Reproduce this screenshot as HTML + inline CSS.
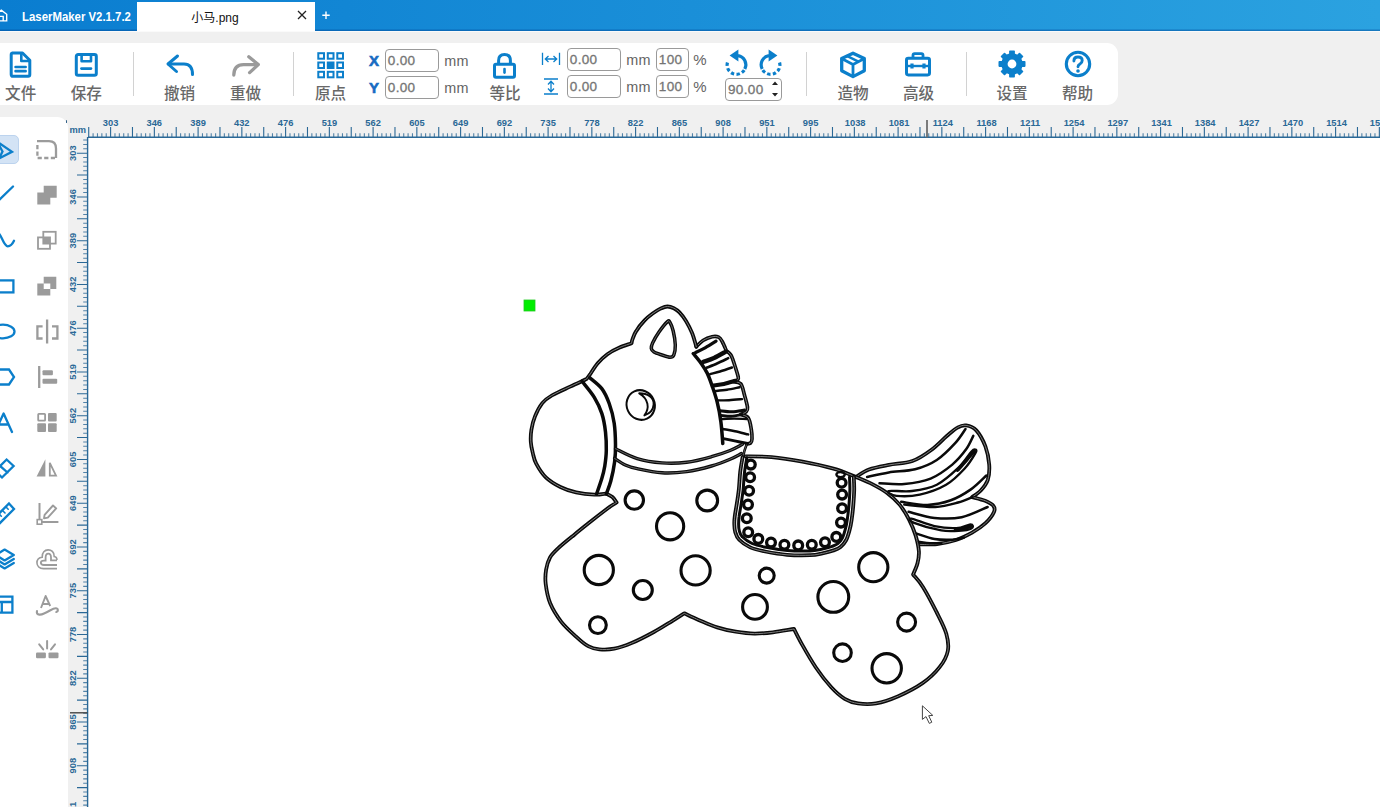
<!DOCTYPE html>
<html lang="zh">
<head>
<meta charset="utf-8">
<title>LaserMaker</title>
<style>
*{box-sizing:border-box;margin:0;padding:0}
html,body{width:1380px;height:807px;overflow:hidden;background:#f0f0f0;font-family:"Liberation Sans","Noto Sans CJK SC",sans-serif;}
#app{position:relative;width:1380px;height:807px;overflow:hidden;background:#f0f0f0}
.abs{position:absolute}
#titlebar{position:absolute;left:0;top:0;width:1380px;height:30.5px;background:linear-gradient(90deg,#0a7dd0 0%,#1a8fd8 50%,#2ba2e0 100%);box-shadow:inset 0 -1.5px 0 rgba(0,70,150,0.45), 0 1px 0 #fafafa}
#titlebar .apptitle{position:absolute;left:22px;top:10px;font-size:12.2px;line-height:14px;color:#fff;font-weight:bold;letter-spacing:0;transform:scaleX(0.935);transform-origin:0 0;white-space:nowrap}
#tab{position:absolute;left:137px;top:2px;width:178px;height:29px;background:#fff}
#tab .name{position:absolute;left:0;width:156px;top:8.5px;text-align:center;font-size:12px;line-height:15px;color:#111}
#toolbar{position:absolute;left:-12px;top:43px;width:1130px;height:62px;background:#fff;border-radius:11px}
.tbtn{position:absolute;top:43px;height:62px;text-align:center}
.tlabel{position:absolute;top:85px;font-size:15.6px;line-height:18px;color:#686868;font-weight:500;white-space:nowrap;transform:translateX(-50%)}
.sep{position:absolute;top:52px;height:44px;width:1px;background:#d2d2d2}
.inp{position:absolute;height:23px;border:1px solid #9a9a9a;border-radius:4px;background:#fff;font-size:13.5px;line-height:22.4px;color:#747474;-webkit-text-stroke:0.3px #747474;letter-spacing:0.35px;padding-left:1.8px;white-space:nowrap;overflow:hidden}
.unit{position:absolute;font-size:14.4px;line-height:16px;color:#636363;margin-left:-0.8px;letter-spacing:0.2px}
.xy{position:absolute;font-size:15px;line-height:16px;font-weight:bold;color:#186bc2;-webkit-text-stroke:0.6px #186bc2}
#sidebar{position:absolute;left:-12px;top:116.6px;width:79.8px;height:700px;background:#fff;border-radius:11px}
#canvas{position:absolute;left:88px;top:138px;width:1292px;height:669px;background:#fff}
svg{position:absolute;overflow:visible}
</style>
</head>
<body>
<div id="app">
<!-- TITLEBAR -->
<div id="titlebar">
  <svg style="left:0;top:0" width="12" height="30" viewBox="0 0 12 30"><path d="M-4.4 14.3 L1.3 10.2 L6.7 14.3 V20.9 H-4.4 Z M-0.7 20.9 V16.4 H3.2 V20.9" fill="none" stroke="#fff" stroke-width="1.4" stroke-linejoin="miter"/></svg>
  <div class="apptitle">LaserMaker V2.1.7.2</div>
  <div id="tab"><div class="name">小马.png</div>
    <svg style="left:160px;top:8px" width="10" height="10" viewBox="0 0 10 10"><path d="M1 1 L9 9 M9 1 L1 9" stroke="#222" stroke-width="1.3" fill="none"/></svg>
  </div>
  <svg style="left:321px;top:10px" width="10" height="10" viewBox="0 0 10 10"><path d="M5 1.6 V9 M1.3 5.3 H8.7" stroke="#fff" stroke-width="1.4" fill="none"/></svg>
</div>
<!-- TOOLBAR -->
<div id="toolbar"></div>
<!--TB-START-->
<!-- file -->
<svg style="left:9px;top:51px" width="23" height="28" viewBox="0 0 23 28"><path d="M3.2 2 H13.5 L20.8 9.3 V23.6 Q20.8 25.3 19.1 25.3 H3.9 Q2.2 25.3 2.2 23.6 V3.7 Q2.2 2 3.9 2 Z" fill="none" stroke="#0b7fcb" stroke-width="3" stroke-linejoin="round"/><path d="M12.3 2.5 V10 H20" fill="none" stroke="#0b7fcb" stroke-width="2.6" stroke-linejoin="round"/><path d="M6.6 16 H16.6 M6.6 20.2 H16.6" stroke="#0b7fcb" stroke-width="2.7" stroke-linecap="round"/></svg>
<div class="tlabel" style="left:20.7px">文件</div>
<!-- save -->
<svg style="left:74px;top:52px" width="25" height="26" viewBox="0 0 25 26"><rect x="2.3" y="2.6" width="20" height="20.6" rx="1.8" fill="none" stroke="#0b7fcb" stroke-width="3"/><path d="M7.6 3 V9.2 H17 V3" fill="none" stroke="#0b7fcb" stroke-width="2.6" stroke-linejoin="round"/><path d="M7.4 16.6 H17" stroke="#0b7fcb" stroke-width="2.6" stroke-linecap="round"/></svg>
<div class="tlabel" style="left:86.3px">保存</div>
<div class="sep" style="left:133px"></div>
<!-- undo -->
<svg style="left:165px;top:54px" width="30" height="24" viewBox="0 0 30 24"><path d="M12.5 2 L3 10 L11.5 17.5" fill="none" stroke="#0b7fcb" stroke-width="3" stroke-linecap="round" stroke-linejoin="round"/><path d="M3.5 10 H19 Q27.5 10 27.5 20.5" fill="none" stroke="#0b7fcb" stroke-width="3" stroke-linecap="round"/></svg>
<div class="tlabel" style="left:179.5px">撤销</div>
<!-- redo -->
<svg style="left:231px;top:55px" width="30" height="24" viewBox="0 0 30 24"><path d="M17.8 1.8 L27.3 9.6 L18.6 17.6" fill="none" stroke="#9a9a9a" stroke-width="3.3" stroke-linecap="round" stroke-linejoin="round"/><path d="M26.5 9.6 H12.5 Q3 9.6 2.8 20" fill="none" stroke="#9a9a9a" stroke-width="3.3" stroke-linecap="round"/></svg>
<div class="tlabel" style="left:245.5px">重做</div>
<div class="sep" style="left:293px"></div>
<!-- origin grid -->
<svg style="left:317px;top:51.6px" width="27" height="27" viewBox="0 0 27 27"><g fill="none" stroke="#0b7fcb" stroke-width="2"><rect x="1.3" y="1.2" width="5.7" height="5.5"/><rect x="10.8" y="1.2" width="5.7" height="5.5"/><rect x="20.3" y="1.2" width="5.7" height="5.5"/><rect x="1.3" y="10.5" width="5.7" height="5.5"/><rect x="10.8" y="10.5" width="5.7" height="5.5" fill="#0b7fcb"/><rect x="20.3" y="10.5" width="5.7" height="5.5"/><rect x="1.3" y="19.8" width="5.7" height="5.5"/><rect x="10.8" y="19.8" width="5.7" height="5.5"/><rect x="20.3" y="19.8" width="5.7" height="5.5"/></g></svg>
<div class="tlabel" style="left:330.5px">原点</div>
<!-- XY -->
<div class="xy" style="left:369px;top:53px">X</div>
<div class="xy" style="left:369px;top:80px">Y</div>
<div class="inp" style="left:385px;top:49px;width:54px">0.00</div>
<div class="inp" style="left:385px;top:76px;width:54px">0.00</div>
<div class="unit" style="left:445px;top:53px">mm</div>
<div class="unit" style="left:445px;top:80px">mm</div>
<!-- lock -->
<svg style="left:492px;top:52px" width="25" height="28" viewBox="0 0 25 28"><rect x="2.5" y="12.2" width="20" height="13" rx="1.5" fill="none" stroke="#0b7fcb" stroke-width="3"/><path d="M6.6 12 V8.5 Q6.6 2.5 12.5 2.5 Q18.4 2.5 18.4 8.5 V12" fill="none" stroke="#0b7fcb" stroke-width="3"/><path d="M12.5 17 V20.6" stroke="#0b7fcb" stroke-width="2.6" stroke-linecap="round"/></svg>
<div class="tlabel" style="left:505px">等比</div>
<!-- width icon -->
<svg style="left:541px;top:52px" width="20" height="14" viewBox="0 0 20 14"><path d="M1.5 0.8 V13 M18.5 0.8 V13 M4.5 7 H15.5 M7.5 4 L4.3 7 L7.5 10 M12.5 4 L15.7 7 L12.5 10" fill="none" stroke="#0b7fcb" stroke-width="1.3"/></svg>
<!-- height icon -->
<svg style="left:543px;top:78px" width="16" height="17" viewBox="0 0 16 17"><path d="M1 1 H15 M1 16 H15 M8 3.5 V13.5 M5 6.5 L8 3.3 L11 6.5 M5 10.5 L8 13.7 L11 10.5" fill="none" stroke="#0b7fcb" stroke-width="1.3"/></svg>
<div class="inp" style="left:567px;top:48px;width:54px">0.00</div>
<div class="inp" style="left:567px;top:75px;width:54px">0.00</div>
<div class="unit" style="left:627px;top:52px">mm</div>
<div class="unit" style="left:627px;top:79px">mm</div>
<div class="inp" style="left:656px;top:48px;width:33px">100</div>
<div class="inp" style="left:656px;top:75px;width:33px">100</div>
<div class="unit" style="left:694px;top:52px;font-size:15px">%</div>
<div class="unit" style="left:694px;top:79px;font-size:15px">%</div>
<!-- rotate ccw -->
<svg style="left:723px;top:48px" width="28" height="30" viewBox="0 0 28 30"><path d="M15 7.6 A9.3 9.3 0 0 1 21.8 21.0" fill="none" stroke="#0b7fcb" stroke-width="3.2"/><path d="M21.8 21.0 A9.3 9.3 0 0 1 5.0 13.0" fill="none" stroke="#0b7fcb" stroke-width="3.2" stroke-dasharray="3.4 2.3" stroke-dashoffset="-1.2"/><path d="M15.4 1.6 V13.4 L6.6 7.6 Z" fill="#0b7fcb"/></svg>
<!-- rotate cw -->
<svg style="left:756px;top:48px" width="28" height="30" viewBox="0 0 28 30"><g transform="translate(28 0) scale(-1 1)"><path d="M15 7.6 A9.3 9.3 0 0 1 21.8 21.0" fill="none" stroke="#0b7fcb" stroke-width="3.2"/><path d="M21.8 21.0 A9.3 9.3 0 0 1 5.0 13.0" fill="none" stroke="#0b7fcb" stroke-width="3.2" stroke-dasharray="3.4 2.3" stroke-dashoffset="-1.2"/><path d="M15.4 1.6 V13.4 L6.6 7.6 Z" fill="#0b7fcb"/></g></svg>
<!-- spin -->
<div class="inp" style="left:725px;top:78px;width:57px;padding-left:2px">90.00</div>
<svg style="left:771px;top:80px" width="8" height="18" viewBox="0 0 8 18"><path d="M1 5 L4 1.5 L7 5 Z M1 13 L4 16.5 L7 13 Z" fill="#222"/></svg>
<div class="sep" style="left:806px"></div>
<!-- box -->
<svg style="left:839px;top:51px" width="28" height="28" viewBox="0 0 28 28"><path d="M14 2.2 L25.3 7.6 V19.8 L14 25.6 L2.7 19.8 V7.6 Z" fill="none" stroke="#0b7fcb" stroke-width="3.3" stroke-linejoin="round"/><path d="M3 7.8 L14 13.4 L25 7.8 M14 13.4 V25" fill="none" stroke="#0b7fcb" stroke-width="2.8" stroke-linejoin="round"/><path d="M8.3 5.2 L19.5 10.6" stroke="#0b7fcb" stroke-width="2.4"/></svg>
<div class="tlabel" style="left:853px">造物</div>
<!-- briefcase -->
<svg style="left:904px;top:51px" width="28" height="27" viewBox="0 0 28 27"><rect x="2.5" y="7.3" width="23" height="16.6" rx="1.8" fill="none" stroke="#0b7fcb" stroke-width="3"/><path d="M9 7 V4.2 Q9 2.6 10.6 2.6 H17.4 Q19 2.6 19 4.2 V7" fill="none" stroke="#0b7fcb" stroke-width="2.8"/><path d="M3 15 H25" stroke="#0b7fcb" stroke-width="2.4"/><path d="M8 12.6 V17.6 M20 12.6 V17.6" stroke="#0b7fcb" stroke-width="3.2"/></svg>
<div class="tlabel" style="left:918.5px">高级</div>
<div class="sep" style="left:966px"></div>
<!-- gear -->
<svg style="left:998.3px;top:50px" width="28" height="28" viewBox="-14 -14 28 28"><g fill="#0b7fcb"><circle r="10.7"/><rect x="-2.9" y="-13.5" width="5.8" height="6" rx="0.8" transform="rotate(0)"/><rect x="-2.9" y="-13.5" width="5.8" height="6" rx="0.8" transform="rotate(45)"/><rect x="-2.9" y="-13.5" width="5.8" height="6" rx="0.8" transform="rotate(90)"/><rect x="-2.9" y="-13.5" width="5.8" height="6" rx="0.8" transform="rotate(135)"/><rect x="-2.9" y="-13.5" width="5.8" height="6" rx="0.8" transform="rotate(180)"/><rect x="-2.9" y="-13.5" width="5.8" height="6" rx="0.8" transform="rotate(225)"/><rect x="-2.9" y="-13.5" width="5.8" height="6" rx="0.8" transform="rotate(270)"/><rect x="-2.9" y="-13.5" width="5.8" height="6" rx="0.8" transform="rotate(315)"/></g><circle r="4.4" fill="#fff"/></svg>
<div class="tlabel" style="left:1012px">设置</div>
<!-- help -->
<svg style="left:1064px;top:50px" width="28" height="28" viewBox="0 0 28 28"><circle cx="14" cy="14" r="11.7" fill="none" stroke="#0b7fcb" stroke-width="3.1"/><path d="M9.9 11.0 Q9.9 7.0 14 7.0 Q18.2 7.0 18.2 10.6 Q18.2 12.8 16 14.0 Q14 15.1 14 16.8" fill="none" stroke="#0b7fcb" stroke-width="2.9" stroke-linecap="round"/><circle cx="14" cy="21.0" r="1.8" fill="#0b7fcb"/></svg>
<div class="tlabel" style="left:1077.5px">帮助</div>

<!--TB-END-->
<!-- SIDEBAR -->
<div id="sidebar"></div>
<div class="abs" style="left:65.6px;top:120px;width:1.6px;height:2.8px;background:#2f5f86;border-radius:0.6px"></div>
<!--SB-START-->
<div class="abs" style="left:-6px;top:135px;width:25px;height:29px;background:#d3e3f5;border:1px solid #bcd3ee;border-radius:5px"></div>
<svg style="left:0;top:120px" width="68" height="560" viewBox="0 120 68 560">
<g fill="none" stroke="#0b7fcb" stroke-width="2.3" stroke-linejoin="round" stroke-linecap="round">
<!-- select arrow -->
<path d="M-3 141.5 L12 151.8 L-1 158.6 L2.5 151.5 Z" stroke-linejoin="miter"/>
<!-- line -->
<path d="M13 186.5 L-2 201"/>
<!-- curve -->
<path d="M-4 236 C0 226 2.5 246.5 7.8 246.3 C11 246.3 12.5 244 14 240.8"/>
<!-- rect -->
<rect x="-8" y="280.4" width="21.4" height="12" stroke-linejoin="miter"/>
<!-- ellipse -->
<ellipse cx="3" cy="331.5" rx="11.5" ry="6.8"/>
<!-- polygon -->
<path d="M-6 369.5 H9 L14 377 L9 384.5 H-6 Z" stroke-linejoin="miter"/>
<!-- A -->
<path d="M-5 432 L3.6 413.5 L12 432 M-2 424.5 H8.5"/>
<!-- eraser -->
<path d="M6.6 459.5 L13.6 466 L2 477.5 L-5 471 Z M-1 465 L7.5 472.5" stroke-linejoin="miter"/>
<!-- ruler -->
<path d="M9 503.5 L14 509 L-2 525 L-7 519.5 Z" stroke-linejoin="miter"/>
<path d="M6 507 L8.2 509.2 M2.5 510.5 L5 513 M-0.8 514 L1.3 516.2" stroke-width="1.6"/>
<!-- layers -->
<path d="M4.6 549.6 L13.8 555 L4.6 560.4 L-4.6 555 Z"/>
<path d="M-4.6 559 L4.6 564.4 L13.8 559 M-4.6 563 L4.6 568.4 L13.8 563"/>
<!-- layout -->
<path d="M-8 596.6 H12.4 V612.6 H-8 Z M-8 602 H12.4 M1.8 602 V612.6" stroke-linejoin="miter"/>
</g>
<g fill="none" stroke="#9b9b9b" stroke-width="2.3">
<!-- g1 dashed round rect -->
<path d="M37 141.2 H49 Q56 141.2 56 148.5 V158"/>
<path d="M37.4 145 V158 H56" stroke-dasharray="4.2 2.4"/>
<!-- g2 union -->
<path d="M43.7 185.7 H56.7 V197.8 H50.3 V204.4 H37.3 V192.6 H43.7 Z" fill="#9b9b9b" stroke="none"/>
<!-- g3 intersect -->
<rect x="43.3" y="231.8" width="12.4" height="11.8" stroke-width="1.8"/><rect x="38" y="237.4" width="12" height="11.4" stroke-width="1.8"/><rect x="43.3" y="237.4" width="6.7" height="6.2" fill="#9b9b9b" stroke="none"/>
<!-- g4 xor -->
<path d="M43.7 276.8 H56.3 V289.1 H50.3 V295.5 H37.3 V283.4 H43.7 Z M43.7 283.4 V289.1 H50.3 V283.4 Z" fill="#9b9b9b" fill-rule="evenodd" stroke="none"/>
<!-- g5 flip -->
<path d="M47.1 319.5 V343.5 M42.6 326.4 H37.4 V338.5 H42.6 M52 326.4 H57.4 V338.5 H52"/>
<!-- g6 align -->
<path d="M39.2 366 V388"/><rect x="42.5" y="370.2" width="10.4" height="5" rx="1" fill="#9b9b9b" stroke="none"/><rect x="42.5" y="378.8" width="14.7" height="5" rx="1" fill="#9b9b9b" stroke="none"/>
<!-- g7 grid -->
<rect x="38.2" y="413.8" width="6.9" height="6.9" rx="0.6" stroke-width="1.8"/><rect x="48" y="412.9" width="8.7" height="8.7" rx="1" fill="#9b9b9b" stroke="none"/><rect x="37.3" y="423.2" width="8.7" height="8.7" rx="1" fill="#9b9b9b" stroke="none"/><rect x="48" y="423.2" width="8.7" height="8.7" rx="1" fill="#9b9b9b" stroke="none"/>
<!-- g8 mirror -->
<path d="M45.4 459.3 V476.5 H36.6 Z" fill="#9b9b9b" stroke="none"/><path d="M49.8 462.8 V475.6 H56.0 Z" stroke-width="1.8"/>
<!-- g9 node edit -->
<path d="M39.5 503 V519.5 M42 522 H58.4" stroke-width="2"/><rect x="37.2" y="519.6" width="4.6" height="4.6" stroke-width="1.6"/><path d="M44.6 514.8 L53 505.5 L56.2 508.4 L47.8 517.6 L44 518.4 Z" stroke-width="1.9" stroke-linejoin="round"/>
<!-- g10 cloud offset -->
<path d="M57 568.6 H43.5 C35 568.6 35 557.5 42.2 557.2 C41.5 547.5 54.5 547.5 54.2 556.5 C56 556.8 57 558 57 560" stroke-width="1.6"/>
<path d="M57 565 H44 C39.8 565 39.8 560.6 44 560.6 H45.6 V557.5 C45.6 552.4 51 552.4 51 557.5 V560.4 H57" stroke-width="1.8"/>
<!-- g11 text on path -->
<path d="M41 608 L45.6 596 L50.2 606 M42.6 604 H48.6" stroke-width="1.9" stroke-linejoin="round"/><path d="M37 611 C36 615 40 615.5 44 613.5 C50 611 53 608 56 608.3 C58.5 608.6 58.5 611.5 56.3 612" stroke-width="2.1" stroke-linecap="round"/>
<!-- g12 explode -->
<rect x="36" y="652.4" width="9.9" height="5.8" rx="1.2" fill="#9b9b9b" stroke="none"/><rect x="48.5" y="652.4" width="10" height="5.8" rx="1.2" fill="#9b9b9b" stroke="none"/><path d="M47.1 641 V648.6 M39.2 644.4 L43.2 649.4 M55 644.4 L51 649.4" stroke-width="2" stroke-linecap="round"/>
</g>
</svg>

<!--SB-END-->
<!-- CANVAS -->
<div id="canvas"></div>
<!--RL-START-->
<svg style="left:0;top:0" width="1380" height="807" viewBox="0 0 1380 807">
<g stroke="#2a6896" fill="none">
<path d="M88 137.3 H1380" stroke-width="1.4"/>
<path d="M87.6 137 V807" stroke-width="1.4"/>
<path d="M88.72 127V137.5M110.60 127V137.5M132.47 127V137.5M154.35 127V137.5M176.22 127V137.5M198.10 127V137.5M219.97 127V137.5M241.85 127V137.5M263.73 127V137.5M285.60 127V137.5M307.48 127V137.5M329.35 127V137.5M351.23 127V137.5M373.10 127V137.5M394.98 127V137.5M416.85 127V137.5M438.73 127V137.5M460.60 127V137.5M482.48 127V137.5M504.35 127V137.5M526.23 127V137.5M548.10 127V137.5M569.98 127V137.5M591.85 127V137.5M613.73 127V137.5M635.60 127V137.5M657.48 127V137.5M679.35 127V137.5M701.23 127V137.5M723.10 127V137.5M744.98 127V137.5M766.85 127V137.5M788.73 127V137.5M810.60 127V137.5M832.48 127V137.5M854.35 127V137.5M876.23 127V137.5M898.10 127V137.5M919.98 127V137.5M941.85 127V137.5M963.73 127V137.5M985.60 127V137.5M1007.48 127V137.5M1029.35 127V137.5M1051.22 127V137.5M1073.10 127V137.5M1094.97 127V137.5M1116.85 127V137.5M1138.72 127V137.5M1160.60 127V137.5M1182.47 127V137.5M1204.35 127V137.5M1226.22 127V137.5M1248.10 127V137.5M1269.97 127V137.5M1291.85 127V137.5M1313.72 127V137.5M1335.60 127V137.5M1357.47 127V137.5M1379.35 127V137.5" stroke-width="1.1"/>
<path d="M93.10 133.2V137.5M97.47 133.2V137.5M101.85 133.2V137.5M106.22 133.2V137.5M114.97 133.2V137.5M119.35 133.2V137.5M123.72 133.2V137.5M128.10 133.2V137.5M136.85 133.2V137.5M141.22 133.2V137.5M145.60 133.2V137.5M149.97 133.2V137.5M158.72 133.2V137.5M163.10 133.2V137.5M167.47 133.2V137.5M171.85 133.2V137.5M180.60 133.2V137.5M184.97 133.2V137.5M189.35 133.2V137.5M193.72 133.2V137.5M202.47 133.2V137.5M206.85 133.2V137.5M211.22 133.2V137.5M215.60 133.2V137.5M224.35 133.2V137.5M228.72 133.2V137.5M233.10 133.2V137.5M237.47 133.2V137.5M246.22 133.2V137.5M250.60 133.2V137.5M254.97 133.2V137.5M259.35 133.2V137.5M268.10 133.2V137.5M272.48 133.2V137.5M276.85 133.2V137.5M281.23 133.2V137.5M289.98 133.2V137.5M294.35 133.2V137.5M298.73 133.2V137.5M303.10 133.2V137.5M311.85 133.2V137.5M316.23 133.2V137.5M320.60 133.2V137.5M324.98 133.2V137.5M333.73 133.2V137.5M338.10 133.2V137.5M342.48 133.2V137.5M346.85 133.2V137.5M355.60 133.2V137.5M359.98 133.2V137.5M364.35 133.2V137.5M368.73 133.2V137.5M377.48 133.2V137.5M381.85 133.2V137.5M386.23 133.2V137.5M390.60 133.2V137.5M399.35 133.2V137.5M403.73 133.2V137.5M408.10 133.2V137.5M412.48 133.2V137.5M421.23 133.2V137.5M425.60 133.2V137.5M429.98 133.2V137.5M434.35 133.2V137.5M443.10 133.2V137.5M447.48 133.2V137.5M451.85 133.2V137.5M456.23 133.2V137.5M464.98 133.2V137.5M469.35 133.2V137.5M473.73 133.2V137.5M478.10 133.2V137.5M486.85 133.2V137.5M491.23 133.2V137.5M495.60 133.2V137.5M499.98 133.2V137.5M508.73 133.2V137.5M513.10 133.2V137.5M517.48 133.2V137.5M521.85 133.2V137.5M530.60 133.2V137.5M534.98 133.2V137.5M539.35 133.2V137.5M543.73 133.2V137.5M552.48 133.2V137.5M556.85 133.2V137.5M561.23 133.2V137.5M565.60 133.2V137.5M574.35 133.2V137.5M578.73 133.2V137.5M583.10 133.2V137.5M587.48 133.2V137.5M596.23 133.2V137.5M600.60 133.2V137.5M604.98 133.2V137.5M609.35 133.2V137.5M618.10 133.2V137.5M622.48 133.2V137.5M626.85 133.2V137.5M631.23 133.2V137.5M639.98 133.2V137.5M644.35 133.2V137.5M648.73 133.2V137.5M653.10 133.2V137.5M661.85 133.2V137.5M666.23 133.2V137.5M670.60 133.2V137.5M674.98 133.2V137.5M683.73 133.2V137.5M688.10 133.2V137.5M692.48 133.2V137.5M696.85 133.2V137.5M705.60 133.2V137.5M709.98 133.2V137.5M714.35 133.2V137.5M718.73 133.2V137.5M727.48 133.2V137.5M731.85 133.2V137.5M736.23 133.2V137.5M740.60 133.2V137.5M749.35 133.2V137.5M753.73 133.2V137.5M758.10 133.2V137.5M762.48 133.2V137.5M771.23 133.2V137.5M775.60 133.2V137.5M779.98 133.2V137.5M784.35 133.2V137.5M793.10 133.2V137.5M797.48 133.2V137.5M801.85 133.2V137.5M806.23 133.2V137.5M814.98 133.2V137.5M819.35 133.2V137.5M823.73 133.2V137.5M828.10 133.2V137.5M836.85 133.2V137.5M841.23 133.2V137.5M845.60 133.2V137.5M849.98 133.2V137.5M858.73 133.2V137.5M863.10 133.2V137.5M867.48 133.2V137.5M871.85 133.2V137.5M880.60 133.2V137.5M884.98 133.2V137.5M889.35 133.2V137.5M893.73 133.2V137.5M902.48 133.2V137.5M906.85 133.2V137.5M911.23 133.2V137.5M915.60 133.2V137.5M924.35 133.2V137.5M928.73 133.2V137.5M933.10 133.2V137.5M937.48 133.2V137.5M946.23 133.2V137.5M950.60 133.2V137.5M954.98 133.2V137.5M959.35 133.2V137.5M968.10 133.2V137.5M972.48 133.2V137.5M976.85 133.2V137.5M981.23 133.2V137.5M989.98 133.2V137.5M994.35 133.2V137.5M998.73 133.2V137.5M1003.10 133.2V137.5M1011.85 133.2V137.5M1016.23 133.2V137.5M1020.60 133.2V137.5M1024.97 133.2V137.5M1033.72 133.2V137.5M1038.10 133.2V137.5M1042.47 133.2V137.5M1046.85 133.2V137.5M1055.60 133.2V137.5M1059.97 133.2V137.5M1064.35 133.2V137.5M1068.72 133.2V137.5M1077.47 133.2V137.5M1081.85 133.2V137.5M1086.22 133.2V137.5M1090.60 133.2V137.5M1099.35 133.2V137.5M1103.72 133.2V137.5M1108.10 133.2V137.5M1112.47 133.2V137.5M1121.22 133.2V137.5M1125.60 133.2V137.5M1129.97 133.2V137.5M1134.35 133.2V137.5M1143.10 133.2V137.5M1147.47 133.2V137.5M1151.85 133.2V137.5M1156.22 133.2V137.5M1164.97 133.2V137.5M1169.35 133.2V137.5M1173.72 133.2V137.5M1178.10 133.2V137.5M1186.85 133.2V137.5M1191.22 133.2V137.5M1195.60 133.2V137.5M1199.97 133.2V137.5M1208.72 133.2V137.5M1213.10 133.2V137.5M1217.47 133.2V137.5M1221.85 133.2V137.5M1230.60 133.2V137.5M1234.97 133.2V137.5M1239.35 133.2V137.5M1243.72 133.2V137.5M1252.47 133.2V137.5M1256.85 133.2V137.5M1261.22 133.2V137.5M1265.60 133.2V137.5M1274.35 133.2V137.5M1278.72 133.2V137.5M1283.10 133.2V137.5M1287.47 133.2V137.5M1296.22 133.2V137.5M1300.60 133.2V137.5M1304.97 133.2V137.5M1309.35 133.2V137.5M1318.10 133.2V137.5M1322.47 133.2V137.5M1326.85 133.2V137.5M1331.22 133.2V137.5M1339.97 133.2V137.5M1344.35 133.2V137.5M1348.72 133.2V137.5M1353.10 133.2V137.5M1361.85 133.2V137.5M1366.22 133.2V137.5M1370.60 133.2V137.5M1374.97 133.2V137.5" stroke-width="1.1" stroke-opacity="0.8"/>
<path d="M77 153.20H87.5M77 175.07H87.5M77 196.95H87.5M77 218.82H87.5M77 240.70H87.5M77 262.57H87.5M77 284.45H87.5M77 306.32H87.5M77 328.20H87.5M77 350.07H87.5M77 371.95H87.5M77 393.82H87.5M77 415.70H87.5M77 437.57H87.5M77 459.45H87.5M77 481.32H87.5M77 503.20H87.5M77 525.08H87.5M77 546.95H87.5M77 568.83H87.5M77 590.70H87.5M77 612.58H87.5M77 634.45H87.5M77 656.33H87.5M77 678.20H87.5M77 700.08H87.5M77 721.95H87.5M77 743.83H87.5M77 765.70H87.5M77 787.58H87.5" stroke-width="1.1"/>
<path d="M83.2 140.07H87.5M83.2 144.45H87.5M83.2 148.82H87.5M83.2 157.57H87.5M83.2 161.95H87.5M83.2 166.32H87.5M83.2 170.70H87.5M83.2 179.45H87.5M83.2 183.82H87.5M83.2 188.20H87.5M83.2 192.57H87.5M83.2 201.32H87.5M83.2 205.70H87.5M83.2 210.07H87.5M83.2 214.45H87.5M83.2 223.20H87.5M83.2 227.57H87.5M83.2 231.95H87.5M83.2 236.32H87.5M83.2 245.07H87.5M83.2 249.45H87.5M83.2 253.82H87.5M83.2 258.20H87.5M83.2 266.95H87.5M83.2 271.32H87.5M83.2 275.70H87.5M83.2 280.07H87.5M83.2 288.82H87.5M83.2 293.20H87.5M83.2 297.57H87.5M83.2 301.95H87.5M83.2 310.70H87.5M83.2 315.07H87.5M83.2 319.45H87.5M83.2 323.82H87.5M83.2 332.57H87.5M83.2 336.95H87.5M83.2 341.32H87.5M83.2 345.70H87.5M83.2 354.45H87.5M83.2 358.82H87.5M83.2 363.20H87.5M83.2 367.57H87.5M83.2 376.32H87.5M83.2 380.70H87.5M83.2 385.07H87.5M83.2 389.45H87.5M83.2 398.20H87.5M83.2 402.57H87.5M83.2 406.95H87.5M83.2 411.32H87.5M83.2 420.07H87.5M83.2 424.45H87.5M83.2 428.82H87.5M83.2 433.20H87.5M83.2 441.95H87.5M83.2 446.32H87.5M83.2 450.70H87.5M83.2 455.07H87.5M83.2 463.82H87.5M83.2 468.20H87.5M83.2 472.57H87.5M83.2 476.95H87.5M83.2 485.70H87.5M83.2 490.07H87.5M83.2 494.45H87.5M83.2 498.82H87.5M83.2 507.57H87.5M83.2 511.95H87.5M83.2 516.33H87.5M83.2 520.70H87.5M83.2 529.45H87.5M83.2 533.83H87.5M83.2 538.20H87.5M83.2 542.58H87.5M83.2 551.33H87.5M83.2 555.70H87.5M83.2 560.08H87.5M83.2 564.45H87.5M83.2 573.20H87.5M83.2 577.58H87.5M83.2 581.95H87.5M83.2 586.33H87.5M83.2 595.08H87.5M83.2 599.45H87.5M83.2 603.83H87.5M83.2 608.20H87.5M83.2 616.95H87.5M83.2 621.33H87.5M83.2 625.70H87.5M83.2 630.08H87.5M83.2 638.83H87.5M83.2 643.20H87.5M83.2 647.58H87.5M83.2 651.95H87.5M83.2 660.70H87.5M83.2 665.08H87.5M83.2 669.45H87.5M83.2 673.83H87.5M83.2 682.58H87.5M83.2 686.95H87.5M83.2 691.33H87.5M83.2 695.70H87.5M83.2 704.45H87.5M83.2 708.83H87.5M83.2 713.20H87.5M83.2 717.58H87.5M83.2 726.33H87.5M83.2 730.70H87.5M83.2 735.08H87.5M83.2 739.45H87.5M83.2 748.20H87.5M83.2 752.58H87.5M83.2 756.95H87.5M83.2 761.33H87.5M83.2 770.08H87.5M83.2 774.45H87.5M83.2 778.83H87.5M83.2 783.20H87.5M83.2 791.95H87.5M83.2 796.33H87.5M83.2 800.70H87.5M83.2 805.08H87.5" stroke-width="1.1" stroke-opacity="0.8"/>
</g>
<path d="M927 120 V137.5" stroke="#6e6e6e" stroke-width="1.8"/>
<path d="M70 712.8 H87.5" stroke="#444" stroke-width="1.4"/>
<g font-family="Liberation Sans, sans-serif" font-size="9.3" font-weight="bold" fill="#2a6896" text-anchor="middle">
<text x="110.6" y="126">303</text>
<text x="154.3" y="126">346</text>
<text x="198.1" y="126">389</text>
<text x="241.8" y="126">432</text>
<text x="285.6" y="126">476</text>
<text x="329.4" y="126">519</text>
<text x="373.1" y="126">562</text>
<text x="416.9" y="126">605</text>
<text x="460.6" y="126">649</text>
<text x="504.4" y="126">692</text>
<text x="548.1" y="126">735</text>
<text x="591.9" y="126">778</text>
<text x="635.6" y="126">822</text>
<text x="679.4" y="126">865</text>
<text x="723.1" y="126">908</text>
<text x="766.9" y="126">951</text>
<text x="810.6" y="126">995</text>
<text x="855.2" y="126">1038</text>
<text x="899.0" y="126">1081</text>
<text x="942.8" y="126">1124</text>
<text x="986.5" y="126">1168</text>
<text x="1030.2" y="126">1211</text>
<text x="1074.0" y="126">1254</text>
<text x="1117.8" y="126">1297</text>
<text x="1161.5" y="126">1341</text>
<text x="1205.2" y="126">1384</text>
<text x="1249.0" y="126">1427</text>
<text x="1292.8" y="126">1470</text>
<text x="1336.5" y="126">1514</text>
<text x="1380.2" y="126">1557</text>
<text x="77.8" y="133">mm</text>
<text transform="translate(76.4 153.2) rotate(-90)">303</text>
<text transform="translate(76.4 196.9) rotate(-90)">346</text>
<text transform="translate(76.4 240.7) rotate(-90)">389</text>
<text transform="translate(76.4 284.4) rotate(-90)">432</text>
<text transform="translate(76.4 328.2) rotate(-90)">476</text>
<text transform="translate(76.4 371.9) rotate(-90)">519</text>
<text transform="translate(76.4 415.7) rotate(-90)">562</text>
<text transform="translate(76.4 459.4) rotate(-90)">605</text>
<text transform="translate(76.4 503.2) rotate(-90)">649</text>
<text transform="translate(76.4 547.0) rotate(-90)">692</text>
<text transform="translate(76.4 590.7) rotate(-90)">735</text>
<text transform="translate(76.4 634.5) rotate(-90)">778</text>
<text transform="translate(76.4 678.2) rotate(-90)">822</text>
<text transform="translate(76.4 722.0) rotate(-90)">865</text>
<text transform="translate(76.4 765.7) rotate(-90)">908</text>
<text transform="translate(76.4 809.5) rotate(-90)">951</text>
</g></svg>
<!--RL-END-->
<!--HS-START-->
<svg style="left:0;top:0" width="1380" height="807" viewBox="0 0 1380 807">
<g fill="none" stroke="#0a0a0a" stroke-linecap="round" stroke-linejoin="round">
<path d="M856.0 477.0C858.1 475.7 863.5 471.5 869.0 469.5C874.5 467.5 881.8 466.3 889.0 464.9C896.2 463.5 905.3 463.5 912.4 461.0C919.4 458.6 925.5 454.2 931.2 450.0C937.0 445.8 942.4 439.8 946.8 436.0C951.2 432.3 954.3 429.3 957.5 427.6C960.7 425.8 963.0 424.9 966.1 425.4C969.3 425.9 973.1 426.9 976.3 430.4C979.5 433.9 983.2 440.7 985.4 446.4C987.5 452.1 988.8 459.1 989.2 464.7C989.6 470.2 989.1 475.5 987.8 479.8C986.4 484.0 983.6 487.3 981.0 490.2C978.4 493.1 973.7 496.0 972.2 497.1C974.3 497.7 981.6 499.3 985.1 500.7C988.6 502.2 991.9 503.8 993.3 505.7C994.8 507.6 995.3 509.1 994.0 512.0C992.7 515.0 989.1 519.8 985.5 523.2C981.8 526.6 977.0 529.8 972.1 532.6C967.2 535.3 961.8 538.1 955.9 540.0C950.1 541.9 943.2 543.3 937.1 544.0C930.9 544.7 922.0 544.3 919.0 544.4" stroke-width="3.8"/>
<path d="M856.0 477.0C858.1 475.7 863.5 471.5 869.0 469.5C874.5 467.5 881.8 466.3 889.0 464.9C896.2 463.5 905.3 463.5 912.4 461.0C919.4 458.6 925.5 454.2 931.2 450.0C937.0 445.8 942.4 439.8 946.8 436.0C951.2 432.3 954.3 429.3 957.5 427.6C960.7 425.8 963.0 424.9 966.1 425.4C969.3 425.9 973.1 426.9 976.3 430.4C979.5 433.9 983.2 440.7 985.4 446.4C987.5 452.1 988.8 459.1 989.2 464.7C989.6 470.2 989.1 475.5 987.8 479.8C986.4 484.0 983.6 487.3 981.0 490.2C978.4 493.1 973.7 496.0 972.2 497.1C974.3 497.7 981.6 499.3 985.1 500.7C988.6 502.2 991.9 503.8 993.3 505.7C994.8 507.6 995.3 509.1 994.0 512.0C992.7 515.0 989.1 519.8 985.5 523.2C981.8 526.6 977.0 529.8 972.1 532.6C967.2 535.3 961.8 538.1 955.9 540.0C950.1 541.9 943.2 543.3 937.1 544.0C930.9 544.7 922.0 544.3 919.0 544.4" stroke="#8c8c8c" stroke-width="0.9"/>
<path d="M856.0 477.0C852.2 475.6 842.4 471.2 833.5 468.7C824.6 466.2 812.8 463.6 802.5 461.7C792.2 459.8 781.0 458.0 771.5 457.1C762.0 456.2 749.8 456.4 745.5 456.3" stroke-width="3.8"/>
<path d="M856.0 477.0C852.2 475.6 842.4 471.2 833.5 468.7C824.6 466.2 812.8 463.6 802.5 461.7C792.2 459.8 781.0 458.0 771.5 457.1C762.0 456.2 749.8 456.4 745.5 456.3" stroke="#8c8c8c" stroke-width="0.9"/>
<path d="M696.3 346.7C697.5 345.6 700.4 342.1 703.0 340.5C705.6 338.9 709.5 337.4 712.1 336.8C714.7 336.2 716.9 336.4 718.6 337.2C720.3 338.0 720.9 339.2 722.2 341.5C723.5 343.8 725.7 349.2 726.4 350.8C727.1 351.5 729.4 352.8 730.7 354.8C732.0 356.8 732.8 359.3 734.0 363.0C735.2 366.7 737.6 374.0 738.2 376.8C738.8 379.6 738.4 379.0 737.6 379.8C736.8 380.6 733.9 381.3 733.2 381.6C734.5 382.0 738.8 381.6 740.7 383.8C742.6 386.0 743.3 390.9 744.4 394.8C745.5 398.7 747.2 404.4 747.5 407.2C747.8 410.0 747.4 410.6 746.2 411.8C745.1 413.0 741.5 414.0 740.6 414.4C741.9 415.0 746.4 415.4 748.2 417.9C750.0 420.4 750.7 426.0 751.3 429.5C751.9 433.0 752.1 436.8 752.0 439.0C751.9 441.2 751.4 442.2 750.5 443.0C749.6 443.8 747.5 443.8 746.9 443.9" stroke-width="3.7"/>
<path d="M696.3 346.7C697.5 345.6 700.4 342.1 703.0 340.5C705.6 338.9 709.5 337.4 712.1 336.8C714.7 336.2 716.9 336.4 718.6 337.2C720.3 338.0 720.9 339.2 722.2 341.5C723.5 343.8 725.7 349.2 726.4 350.8C727.1 351.5 729.4 352.8 730.7 354.8C732.0 356.8 732.8 359.3 734.0 363.0C735.2 366.7 737.6 374.0 738.2 376.8C738.8 379.6 738.4 379.0 737.6 379.8C736.8 380.6 733.9 381.3 733.2 381.6C734.5 382.0 738.8 381.6 740.7 383.8C742.6 386.0 743.3 390.9 744.4 394.8C745.5 398.7 747.2 404.4 747.5 407.2C747.8 410.0 747.4 410.6 746.2 411.8C745.1 413.0 741.5 414.0 740.6 414.4C741.9 415.0 746.4 415.4 748.2 417.9C750.0 420.4 750.7 426.0 751.3 429.5C751.9 433.0 752.1 436.8 752.0 439.0C751.9 441.2 751.4 442.2 750.5 443.0C749.6 443.8 747.5 443.8 746.9 443.9" stroke="#8c8c8c" stroke-width="0.9"/>
<path d="M696.3 346.7C695.6 344.4 693.9 337.6 692.2 333.3C690.4 329.1 688.1 324.6 686.0 321.1C683.9 317.6 681.6 314.6 679.5 312.4C677.5 310.3 675.8 309.2 673.8 308.2C671.8 307.2 669.7 306.5 667.5 306.5C665.4 306.5 663.3 307.3 660.9 308.4C658.5 309.6 655.8 311.3 653.0 313.3C650.3 315.3 647.4 317.4 644.6 320.4C641.7 323.4 638.0 328.1 636.0 331.4C633.9 334.6 633.1 337.9 632.3 339.9C631.6 341.9 631.7 342.7 631.6 343.2C629.6 344.0 623.6 345.7 619.6 347.5C615.5 349.3 611.0 351.5 607.4 354.2C603.8 356.8 600.5 360.0 597.7 363.3C594.9 366.6 592.2 371.2 590.4 373.8C588.5 376.4 587.2 378.2 586.6 379.0C583.9 380.3 576.0 383.8 570.2 386.6C564.4 389.3 556.4 392.7 551.8 395.5C547.1 398.3 545.1 399.7 542.3 403.1C539.5 406.6 536.8 411.9 535.0 416.4C533.2 420.8 532.1 425.5 531.4 429.7C530.7 434.0 530.6 438.0 530.8 441.8C531.0 445.6 531.8 449.0 532.7 452.6C533.6 456.3 534.0 459.5 536.2 463.6C538.4 467.7 541.8 473.4 545.8 477.3C549.9 481.2 555.3 484.4 560.4 487.0C565.4 489.5 570.5 491.1 576.1 492.4C581.8 493.7 589.4 494.5 594.3 494.7C599.3 494.9 604.1 493.8 606.0 493.6C607.1 494.2 610.6 495.5 612.4 497.0C614.1 498.5 615.9 501.6 616.6 502.5C615.5 503.2 614.1 503.7 610.2 506.6C606.2 509.5 598.9 515.1 592.9 519.8C587.0 524.5 580.1 529.9 574.4 534.7C568.6 539.4 562.4 544.3 558.3 548.2C554.3 552.0 551.9 554.2 549.9 557.7C547.9 561.3 546.8 565.3 546.1 569.6C545.4 574.0 545.0 578.5 545.7 584.1C546.4 589.7 547.6 597.1 550.2 603.3C552.8 609.6 557.0 616.2 561.3 621.8C565.6 627.3 571.6 632.5 576.1 636.6C580.5 640.7 584.3 644.1 588.2 646.2C592.1 648.3 595.0 648.9 599.4 649.3C603.8 649.7 608.9 649.7 614.3 648.7C619.7 647.7 625.0 645.9 631.6 643.1C638.2 640.3 647.1 635.7 653.9 632.0C660.7 628.3 667.4 623.9 672.5 620.8C677.6 617.7 682.3 614.5 684.3 613.3C686.7 614.4 693.1 617.5 698.6 619.9C704.1 622.2 711.0 625.4 717.2 627.4C723.4 629.4 729.6 630.7 735.8 631.7C742.0 632.7 748.1 633.5 754.3 633.6C760.5 633.7 766.3 633.1 772.9 632.3C779.5 631.5 790.5 629.5 794.0 629.0C795.4 631.6 798.7 638.5 802.3 644.9C805.9 651.3 810.9 660.1 815.7 667.2C820.5 674.3 826.5 682.0 831.3 687.3C836.1 692.6 840.2 696.1 844.7 698.8C849.2 701.5 852.9 702.6 858.1 703.4C863.3 704.2 869.3 704.6 876.0 703.4C882.7 702.2 890.5 699.6 898.3 696.2C906.1 692.8 916.0 687.7 922.9 682.9C929.8 678.1 935.5 672.5 939.6 667.2C943.8 661.9 946.7 656.6 947.8 651.0C948.9 645.4 948.2 640.3 946.3 633.7C944.4 627.1 940.1 619.2 936.2 611.4C932.3 603.6 926.7 593.0 922.9 586.9C919.1 580.8 914.7 576.6 913.1 574.5C913.8 572.7 916.6 567.1 917.5 563.3C918.5 559.4 919.2 556.0 918.9 551.4C918.6 546.7 917.2 540.8 915.6 535.4C913.9 530.0 911.5 524.4 908.8 519.2C906.2 514.0 903.0 508.8 899.4 504.4C895.8 500.1 891.9 496.6 887.4 493.2C883.0 489.9 877.9 487.1 872.7 484.4C867.5 481.6 858.8 478.2 856.0 477.0" stroke-width="3.8"/>
<path d="M696.3 346.7C695.6 344.4 693.9 337.6 692.2 333.3C690.4 329.1 688.1 324.6 686.0 321.1C683.9 317.6 681.6 314.6 679.5 312.4C677.5 310.3 675.8 309.2 673.8 308.2C671.8 307.2 669.7 306.5 667.5 306.5C665.4 306.5 663.3 307.3 660.9 308.4C658.5 309.6 655.8 311.3 653.0 313.3C650.3 315.3 647.4 317.4 644.6 320.4C641.7 323.4 638.0 328.1 636.0 331.4C633.9 334.6 633.1 337.9 632.3 339.9C631.6 341.9 631.7 342.7 631.6 343.2C629.6 344.0 623.6 345.7 619.6 347.5C615.5 349.3 611.0 351.5 607.4 354.2C603.8 356.8 600.5 360.0 597.7 363.3C594.9 366.6 592.2 371.2 590.4 373.8C588.5 376.4 587.2 378.2 586.6 379.0C583.9 380.3 576.0 383.8 570.2 386.6C564.4 389.3 556.4 392.7 551.8 395.5C547.1 398.3 545.1 399.7 542.3 403.1C539.5 406.6 536.8 411.9 535.0 416.4C533.2 420.8 532.1 425.5 531.4 429.7C530.7 434.0 530.6 438.0 530.8 441.8C531.0 445.6 531.8 449.0 532.7 452.6C533.6 456.3 534.0 459.5 536.2 463.6C538.4 467.7 541.8 473.4 545.8 477.3C549.9 481.2 555.3 484.4 560.4 487.0C565.4 489.5 570.5 491.1 576.1 492.4C581.8 493.7 589.4 494.5 594.3 494.7C599.3 494.9 604.1 493.8 606.0 493.6C607.1 494.2 610.6 495.5 612.4 497.0C614.1 498.5 615.9 501.6 616.6 502.5C615.5 503.2 614.1 503.7 610.2 506.6C606.2 509.5 598.9 515.1 592.9 519.8C587.0 524.5 580.1 529.9 574.4 534.7C568.6 539.4 562.4 544.3 558.3 548.2C554.3 552.0 551.9 554.2 549.9 557.7C547.9 561.3 546.8 565.3 546.1 569.6C545.4 574.0 545.0 578.5 545.7 584.1C546.4 589.7 547.6 597.1 550.2 603.3C552.8 609.6 557.0 616.2 561.3 621.8C565.6 627.3 571.6 632.5 576.1 636.6C580.5 640.7 584.3 644.1 588.2 646.2C592.1 648.3 595.0 648.9 599.4 649.3C603.8 649.7 608.9 649.7 614.3 648.7C619.7 647.7 625.0 645.9 631.6 643.1C638.2 640.3 647.1 635.7 653.9 632.0C660.7 628.3 667.4 623.9 672.5 620.8C677.6 617.7 682.3 614.5 684.3 613.3C686.7 614.4 693.1 617.5 698.6 619.9C704.1 622.2 711.0 625.4 717.2 627.4C723.4 629.4 729.6 630.7 735.8 631.7C742.0 632.7 748.1 633.5 754.3 633.6C760.5 633.7 766.3 633.1 772.9 632.3C779.5 631.5 790.5 629.5 794.0 629.0C795.4 631.6 798.7 638.5 802.3 644.9C805.9 651.3 810.9 660.1 815.7 667.2C820.5 674.3 826.5 682.0 831.3 687.3C836.1 692.6 840.2 696.1 844.7 698.8C849.2 701.5 852.9 702.6 858.1 703.4C863.3 704.2 869.3 704.6 876.0 703.4C882.7 702.2 890.5 699.6 898.3 696.2C906.1 692.8 916.0 687.7 922.9 682.9C929.8 678.1 935.5 672.5 939.6 667.2C943.8 661.9 946.7 656.6 947.8 651.0C948.9 645.4 948.2 640.3 946.3 633.7C944.4 627.1 940.1 619.2 936.2 611.4C932.3 603.6 926.7 593.0 922.9 586.9C919.1 580.8 914.7 576.6 913.1 574.5C913.8 572.7 916.6 567.1 917.5 563.3C918.5 559.4 919.2 556.0 918.9 551.4C918.6 546.7 917.2 540.8 915.6 535.4C913.9 530.0 911.5 524.4 908.8 519.2C906.2 514.0 903.0 508.8 899.4 504.4C895.8 500.1 891.9 496.6 887.4 493.2C883.0 489.9 877.9 487.1 872.7 484.4C867.5 481.6 858.8 478.2 856.0 477.0" stroke="#8c8c8c" stroke-width="0.9"/>
<path d="M693.2 353.5C694.5 355.1 698.7 359.9 701.0 363.2C703.3 366.5 705.3 369.3 707.2 373.1C709.1 376.9 710.5 381.2 712.2 386.1C713.9 391.0 715.8 396.2 717.2 402.2C718.7 408.2 720.0 415.1 720.9 422.0C721.8 428.9 722.5 439.9 722.8 443.5" stroke-width="3.5"/>
<path d="M746.8 444 C745.2 448 743.8 452 743.0 457" stroke-width="2.6"/>
<path d="M746.8 444 C745.2 448 743.8 452 743.0 457" stroke="#8c8c8c" stroke-width="0.6"/>
<path d="M695.6 352.6C697.2 351.8 702.1 349.5 705.5 347.6C708.9 345.7 714.2 342.3 716.0 341.2" stroke-width="3.3"/>
<path d="M703.0 362.0C704.8 361.3 710.2 359.7 714.0 358.0C717.8 356.3 723.8 352.7 725.8 351.6" stroke-width="4.4"/>
<path d="M706.5 367.8C708.2 367.1 713.4 365.1 717.0 363.5C720.6 361.9 726.3 359.1 728.2 358.2" stroke-width="2.6"/>
<path d="M709.7 374.3C711.4 373.8 716.3 372.6 720.0 371.5C723.7 370.4 730.0 368.2 732.0 367.5" stroke-width="2.4"/>
<path d="M712.8 385.6C714.7 385.3 720.2 384.8 724.0 384.0C727.8 383.2 733.6 381.3 735.5 380.8" stroke-width="4.2"/>
<path d="M714.7 391.1C716.8 390.9 722.9 390.4 727.0 389.8C731.1 389.2 737.4 387.7 739.5 387.3" stroke-width="2.4"/>
<path d="M717.2 400.4C719.2 400.4 724.9 400.4 729.0 400.2C733.1 400.0 739.8 399.3 742.0 399.1" stroke-width="2.4"/>
<path d="M719.7 410.7C721.8 410.9 727.9 411.9 732.0 411.8C736.1 411.7 742.3 410.4 744.4 410.1" stroke-width="3.0"/>
<path d="M720.9 415.4C722.6 415.5 727.5 416.3 731.0 416.2C734.5 416.1 740.2 414.9 742.0 414.6" stroke-width="3.0"/>
<path d="M721.2 419.2C723.3 419.1 729.7 418.7 734.0 418.7C738.3 418.7 744.8 419.0 746.9 419.1" stroke-width="2.2"/>
<path d="M722.8 428.9C724.8 429.3 730.8 430.3 735.0 431.2C739.2 432.1 746.0 433.9 748.2 434.4" stroke-width="2.5"/>
<path d="M723.4 438.6C725.5 439.0 731.8 440.3 735.8 441.1C739.8 441.9 745.5 443.0 747.5 443.4" stroke-width="3.0"/>
<path d="M867.1 477.0C870.7 476.2 880.8 473.7 888.8 472.4C896.8 471.1 907.1 471.4 915.1 469.3C923.1 467.2 930.1 464.4 936.8 460.0C943.5 455.6 950.6 448.1 955.4 442.9C960.2 437.7 963.8 431.3 965.5 429.0" stroke-width="2.5"/>
<path d="M879.5 483.2C883.6 483.3 895.8 484.8 904.3 484.0C912.8 483.2 922.6 481.8 930.6 478.6C938.6 475.4 946.3 469.5 952.3 464.6C958.2 459.7 962.8 453.9 966.3 449.1C969.8 444.3 972.1 438.1 973.3 435.9" stroke-width="2.5"/>
<path d="M901.2 501.8C905.6 502.3 919.2 505.1 927.5 504.9C935.8 504.6 943.6 502.9 950.8 500.3C958.0 497.7 965.0 493.5 970.9 489.4C976.8 485.3 983.8 477.8 986.4 475.5" stroke-width="2.5"/>
<path d="M904.3 504.6C909.5 505.0 926.3 507.4 935.3 507.0C944.2 506.6 951.8 504.2 958.0 502.5C964.2 500.8 970.2 497.9 972.6 497.0" stroke-width="2.5"/>
<path d="M908.6 511.8C912.9 512.8 925.6 517.0 934.5 517.9C943.4 518.8 952.9 519.0 961.7 517.2C970.6 515.4 983.3 508.7 987.6 507.0" stroke-width="2.5"/>
<path d="M916.8 533.6C919.8 534.5 928.6 538.0 934.5 539.0C940.4 540.0 947.3 539.9 952.2 539.7C957.1 539.5 962.0 538.0 964.0 537.6" stroke-width="2.5"/>
<path d="M918.8 541.8C920.7 542.0 926.2 543.0 930.0 543.2C933.8 543.5 939.4 543.3 941.3 543.3" stroke-width="2.5"/>
<path d="M888.8 491.0C891.4 490.2 904.0 492.0 912.0 491.0C920.0 490.0 929.0 488.7 936.8 484.8C944.5 480.9 952.7 473.2 958.5 467.7C964.3 462.1 968.7 454.5 971.5 451.5C974.3 448.5 974.6 449.4 975.3 449.6C976.0 449.9 977.3 449.9 975.5 453.0C973.7 456.1 969.6 463.2 964.7 468.5C959.8 473.8 953.6 480.4 946.1 484.8C938.6 489.2 928.1 492.8 919.8 494.6C911.5 496.4 901.7 496.4 896.5 495.8C891.3 495.2 886.2 491.8 888.8 491.0Z" stroke-width="2.3"/>
<path d="M911.3 518.6C914.7 519.1 927.0 524.5 934.5 526.1C942.0 527.7 950.5 528.4 956.3 528.1C962.1 527.9 966.8 525.0 969.5 524.6C972.2 524.2 972.6 525.2 972.8 525.9C973.0 526.6 972.4 528.2 970.5 529.0C968.6 529.8 966.6 530.4 961.7 530.6C956.8 530.8 949.2 531.7 941.3 530.4C933.4 529.1 919.1 524.9 914.1 522.9C909.1 520.9 907.9 518.1 911.3 518.6Z" stroke-width="2.3"/>
<path d="M957.5 470.2C958.4 469.2 961.1 466.4 963.0 464.2C964.9 462.0 967.2 459.3 969.0 457.2C970.8 455.1 973.2 452.4 974.0 451.4" stroke-width="3.5"/>
<path d="M955.5 529.4C956.4 529.3 959.2 529.3 961.0 529.0C962.8 528.7 964.4 528.2 966.0 527.8C967.6 527.4 969.7 526.8 970.4 526.6" stroke-width="3.6"/>
<path d="M582.0 381.2C584.0 383.9 591.0 391.9 594.3 397.3C597.6 402.7 599.9 407.6 601.8 413.4C603.7 419.2 604.8 425.8 605.5 432.0C606.2 438.2 606.4 444.8 606.3 450.5C606.2 456.2 605.5 461.3 604.8 466.0C604.0 470.7 603.2 473.9 601.8 478.5C600.4 483.1 597.5 491.3 596.6 493.9" stroke-width="3.5"/>
<path d="M589.6 377.6C591.6 379.4 598.5 384.3 601.8 388.6C605.1 392.9 607.1 397.7 609.2 403.5C611.3 409.3 613.2 416.5 614.2 423.3C615.2 430.1 615.4 437.9 615.5 444.3C615.6 450.8 615.4 455.9 614.6 462.0C613.8 468.1 612.2 475.7 610.8 481.0C609.4 486.3 607.0 491.8 606.3 493.9" stroke-width="3.5"/>
<path d="M615.5 448.7C619.1 450.4 629.5 456.2 637.2 458.6C645.0 461.0 653.8 462.3 662.0 462.9C670.2 463.5 678.5 463.3 686.7 462.3C695.0 461.3 704.3 458.7 711.5 456.7C718.7 454.7 724.9 452.6 730.1 450.5C735.3 448.4 740.4 445.3 742.5 444.3" stroke-width="3.4"/>
<path d="M615.5 448.7C619.1 450.4 629.5 456.2 637.2 458.6C645.0 461.0 653.8 462.3 662.0 462.9C670.2 463.5 678.5 463.3 686.7 462.3C695.0 461.3 704.3 458.7 711.5 456.7C718.7 454.7 724.9 452.6 730.1 450.5C735.3 448.4 740.4 445.3 742.5 444.3" stroke="#8c8c8c" stroke-width="0.7"/>
<path d="M614.6 458.4C616.4 459.5 621.5 463.3 625.3 465.0C629.1 466.7 631.1 467.4 637.2 468.7C643.3 470.0 653.8 472.3 662.0 472.8C670.2 473.3 678.5 472.7 686.7 471.6C695.0 470.5 704.3 468.1 711.5 466.0C718.7 463.9 725.1 461.3 730.1 459.2C735.1 457.1 739.4 454.5 741.3 453.6" stroke-width="3.4"/>
<path d="M614.6 458.4C616.4 459.5 621.5 463.3 625.3 465.0C629.1 466.7 631.1 467.4 637.2 468.7C643.3 470.0 653.8 472.3 662.0 472.8C670.2 473.3 678.5 472.7 686.7 471.6C695.0 470.5 704.3 468.1 711.5 466.0C718.7 463.9 725.1 461.3 730.1 459.2C735.1 457.1 739.4 454.5 741.3 453.6" stroke="#8c8c8c" stroke-width="0.7"/>
<path d="M667.5 321.6C665.7 323.2 661.5 328.4 659.0 332.0C656.5 335.6 653.9 340.2 652.6 343.0C651.3 345.8 651.1 347.1 651.3 348.6C651.5 350.1 652.2 350.9 654.0 352.0C655.8 353.1 659.3 354.1 662.0 355.0C664.7 355.9 668.0 357.2 670.0 357.2C672.0 357.2 672.9 357.0 673.8 355.0C674.7 353.0 675.4 349.0 675.3 345.0C675.2 341.0 674.1 334.8 673.2 331.0C672.3 327.2 671.0 324.1 670.0 322.5C669.0 320.9 669.3 320.0 667.5 321.6Z" stroke-width="3.5"/>
<path d="M667.5 321.6C665.7 323.2 661.5 328.4 659.0 332.0C656.5 335.6 653.9 340.2 652.6 343.0C651.3 345.8 651.1 347.1 651.3 348.6C651.5 350.1 652.2 350.9 654.0 352.0C655.8 353.1 659.3 354.1 662.0 355.0C664.7 355.9 668.0 357.2 670.0 357.2C672.0 357.2 672.9 357.0 673.8 355.0C674.7 353.0 675.4 349.0 675.3 345.0C675.2 341.0 674.1 334.8 673.2 331.0C672.3 327.2 671.0 324.1 670.0 322.5C669.0 320.9 669.3 320.0 667.5 321.6Z" stroke="#8c8c8c" stroke-width="0.7"/>
<path d="M742.6 457.1C742.2 459.6 740.8 466.6 740.2 472.0C739.6 477.4 739.4 484.1 738.8 489.6C738.2 495.1 737.3 500.6 736.6 505.0C735.9 509.4 735.2 512.8 734.8 516.0C734.4 519.2 734.2 521.3 734.3 524.0C734.4 526.7 734.4 529.4 735.2 532.0C736.0 534.6 736.7 537.2 739.2 539.8C741.7 542.4 746.0 545.4 750.3 547.4C754.6 549.4 759.1 550.3 765.2 551.5C771.3 552.7 779.5 554.2 787.0 554.8C794.5 555.4 804.4 555.4 810.3 555.2C816.2 555.0 818.5 554.2 822.4 553.4C826.3 552.6 830.5 551.5 833.5 550.4C836.5 549.3 838.4 548.7 840.5 547.0C842.6 545.3 844.7 542.8 846.2 540.0C847.7 537.2 848.7 533.3 849.6 530.0C850.5 526.7 851.0 524.2 851.6 520.0C852.2 515.8 852.9 510.0 853.3 505.0C853.7 500.0 854.1 494.7 854.2 490.0C854.3 485.3 853.9 479.2 853.8 477.0" stroke-width="3.8"/>
<path d="M742.6 457.1C742.2 459.6 740.8 466.6 740.2 472.0C739.6 477.4 739.4 484.1 738.8 489.6C738.2 495.1 737.3 500.6 736.6 505.0C735.9 509.4 735.2 512.8 734.8 516.0C734.4 519.2 734.2 521.3 734.3 524.0C734.4 526.7 734.4 529.4 735.2 532.0C736.0 534.6 736.7 537.2 739.2 539.8C741.7 542.4 746.0 545.4 750.3 547.4C754.6 549.4 759.1 550.3 765.2 551.5C771.3 552.7 779.5 554.2 787.0 554.8C794.5 555.4 804.4 555.4 810.3 555.2C816.2 555.0 818.5 554.2 822.4 553.4C826.3 552.6 830.5 551.5 833.5 550.4C836.5 549.3 838.4 548.7 840.5 547.0C842.6 545.3 844.7 542.8 846.2 540.0C847.7 537.2 848.7 533.3 849.6 530.0C850.5 526.7 851.0 524.2 851.6 520.0C852.2 515.8 852.9 510.0 853.3 505.0C853.7 500.0 854.1 494.7 854.2 490.0C854.3 485.3 853.9 479.2 853.8 477.0" stroke="#8c8c8c" stroke-width="0.9"/>
<path d="M746.8 457.8C746.4 460.2 745.1 467.1 744.5 472.5C743.8 477.9 743.7 484.5 743.1 490.1C742.5 495.6 741.5 501.2 740.9 505.6C740.2 510.1 739.4 513.5 739.1 516.5C738.7 519.6 738.6 521.5 738.6 523.9C738.6 526.3 738.7 528.6 739.3 530.7C739.9 532.9 740.1 534.7 742.3 536.8C744.4 538.9 748.1 541.7 752.1 543.5C756.0 545.2 760.2 546.1 766.0 547.3C771.9 548.5 780.0 549.9 787.4 550.5C794.7 551.1 804.4 551.1 810.1 550.9C815.8 550.7 817.9 549.9 821.5 549.2C825.2 548.4 829.4 547.3 832.1 546.3C834.8 545.4 836.1 545.1 837.8 543.7C839.5 542.3 841.1 540.4 842.4 538.0C843.7 535.5 844.6 532.0 845.4 528.9C846.3 525.8 846.8 523.4 847.3 519.4C847.9 515.3 848.6 509.5 849.0 504.6C849.4 499.7 849.8 494.5 849.9 489.9C850.0 485.3 849.6 479.3 849.5 477.1" stroke-width="3.0"/>
<ellipse cx="640.7" cy="405.0" rx="14.0" ry="15.0" stroke-width="2.0" transform="rotate(-25 640.7 405.0)"/>
<path d="M639.2 393.3 C647.5 393.3 654.2 397.5 653.6 404.6 C653.2 410 649.6 413.6 644.4 415.4 C647.6 411.2 648.2 407.6 647.4 403.8 C646.5 399.5 644 396 639.2 393.3 Z" stroke-width="1.9" stroke-linejoin="round"/>
<circle cx="634.3" cy="500.1" r="9.2" stroke-width="3.1"/>
<circle cx="707.2" cy="500.5" r="10.4" stroke-width="3.1"/>
<circle cx="670.1" cy="526.3" r="13.6" stroke-width="3.1"/>
<circle cx="598.8" cy="570" r="14.6" stroke-width="3.1"/>
<circle cx="642.8" cy="590.0" r="9.5" stroke-width="3.1"/>
<circle cx="695.6" cy="570.4" r="14.6" stroke-width="3.1"/>
<circle cx="597.9" cy="625.1" r="8.4" stroke-width="3.1"/>
<circle cx="766.7" cy="575.6" r="7.5" stroke-width="3.1"/>
<circle cx="755" cy="606.9" r="12.4" stroke-width="3.1"/>
<circle cx="833.3" cy="596.9" r="15.4" stroke-width="3.1"/>
<circle cx="873.3" cy="567.2" r="14.6" stroke-width="3.1"/>
<circle cx="906.6" cy="622.1" r="9.0" stroke-width="3.1"/>
<circle cx="842.5" cy="652.7" r="8.8" stroke-width="3.1"/>
<circle cx="886.7" cy="668.3" r="14.7" stroke-width="3.1"/>
<circle cx="750.8" cy="464.6" r="4.4" stroke-width="3.3"/>
<circle cx="750.1" cy="477.2" r="4.4" stroke-width="3.3"/>
<circle cx="749.1" cy="490.8" r="4.4" stroke-width="3.3"/>
<circle cx="748" cy="504.6" r="4.4" stroke-width="3.3"/>
<circle cx="746.8" cy="518.2" r="4.4" stroke-width="3.3"/>
<circle cx="748.2" cy="532.2" r="4.4" stroke-width="3.3"/>
<circle cx="758.3" cy="538.9" r="4.4" stroke-width="3.3"/>
<circle cx="771" cy="542.6" r="4.4" stroke-width="3.3"/>
<circle cx="784.4" cy="544.7" r="4.4" stroke-width="3.3"/>
<circle cx="798.2" cy="545.4" r="4.4" stroke-width="3.3"/>
<circle cx="811.8" cy="544.7" r="4.4" stroke-width="3.3"/>
<circle cx="825" cy="542.3" r="4.4" stroke-width="3.3"/>
<circle cx="836.3" cy="536.9" r="4.4" stroke-width="3.3"/>
<circle cx="841" cy="522.6" r="4.4" stroke-width="3.3"/>
<circle cx="842.1" cy="508.2" r="4.4" stroke-width="3.3"/>
<circle cx="842.1" cy="494.6" r="4.4" stroke-width="3.3"/>
<circle cx="841.6" cy="482.8" r="4.4" stroke-width="3.3"/>
<ellipse cx="840.6" cy="474.6" rx="4.2" ry="2.6" stroke-width="2.4"/>
</g>
<rect x="524" y="300" width="11" height="11" fill="#00ee00" stroke="#22c822" stroke-width="0.8"/>
<path d="M922.4 705.8 V719.4 L926.0 716.6 L929.3 723.4 L931.8 722.2 L928.7 715.7 L932.8 715.4 Z" fill="#fff" stroke="#444" stroke-width="1" stroke-linejoin="miter"/>
</svg>
<!--HS-END-->
</div>
</body>
</html>
